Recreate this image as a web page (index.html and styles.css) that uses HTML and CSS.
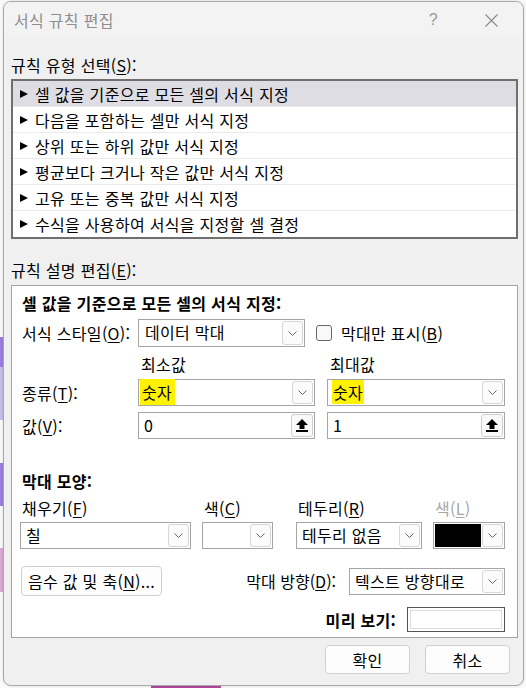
FILE: index.html
```html
<!DOCTYPE html>
<html lang="ko">
<head>
    <meta charset="UTF-8">
    <title>서식 규칙 편집</title>
    <link rel="stylesheet" href="styles.css">
</head>
<body>

<div class="dialog">
    <div class="titlebar">
        <span class="title">서식 규칙 편집</span>
        <span class="help">?</span>
        <span class="close">
            <svg width="13" height="13" viewBox="0 0 13 13"><path d="M0.5 0.5L12.5 12.5M12.5 0.5L0.5 12.5" stroke="#8a8a8a" stroke-width="1.1" fill="none"/></svg>
        </span>
    </div>

    <div class="content">
        <div class="caption cap-type">규칙 유형 선택(<u>S</u>):</div>
        <ul class="rules">
            <li class="selected"><span class="tri"></span>셀 값을 기준으로 모든 셀의 서식 지정</li>
            <li><span class="tri"></span>다음을 포함하는 셀만 서식 지정</li>
            <li><span class="tri"></span>상위 또는 하위 값만 서식 지정</li>
            <li><span class="tri"></span>평균보다 크거나 작은 값만 서식 지정</li>
            <li><span class="tri"></span>고유 또는 중복 값만 서식 지정</li>
            <li><span class="tri"></span>수식을 사용하여 서식을 지정할 셀 결정</li>
        </ul>

        <div class="caption cap-desc">규칙 설명 편집(<u>E</u>):</div>
        <div class="panel">
            <div class="heading">셀 값을 기준으로 모든 셀의 서식 지정:</div>

            <div class="style-row">
                <span class="row-label">서식 스타일(<u>O</u>):</span>
                <div class="select w-style">
                    <span class="value">데이터 막대</span>
                    <span class="drop"><svg width="9" height="5" viewBox="0 0 9 5"><polyline points="0.5,0.5 4.5,4.5 8.5,0.5" fill="none" stroke="#666" stroke-width="1"/></svg></span>
                </div>
                <span class="check"></span>
                <span class="check-label">막대만 표시(<u>B</u>)</span>
            </div>

            <div class="minmax">
                <span></span>
                <span class="col-head">최소값</span>
                <span class="col-head">최대값</span>

                <span class="row-label">종류(<u>T</u>):</span>
                <div class="select">
                    <span class="value"><mark class="hl-min">숫자</mark></span>
                    <span class="drop"><svg width="9" height="5" viewBox="0 0 9 5"><polyline points="0.5,0.5 4.5,4.5 8.5,0.5" fill="none" stroke="#666" stroke-width="1"/></svg></span>
                </div>
                <div class="select">
                    <span class="value"><mark class="hl-max">숫자</mark></span>
                    <span class="drop"><svg width="9" height="5" viewBox="0 0 9 5"><polyline points="0.5,0.5 4.5,4.5 8.5,0.5" fill="none" stroke="#666" stroke-width="1"/></svg></span>
                </div>

                <span class="row-label">값(<u>V</u>):</span>
                <div class="select">
                    <span class="value">0</span>
                    <span class="pick"><svg width="12" height="13" viewBox="0 0 12 13"><path d="M6 0L12 6H8.5V10H3.5V6H0Z" fill="#000"/><rect x="0" y="11" width="12" height="2" fill="#000"/></svg></span>
                </div>
                <div class="select">
                    <span class="value">1</span>
                    <span class="pick"><svg width="12" height="13" viewBox="0 0 12 13"><path d="M6 0L12 6H8.5V10H3.5V6H0Z" fill="#000"/><rect x="0" y="11" width="12" height="2" fill="#000"/></svg></span>
                </div>
            </div>

            <div class="heading bar-head">막대 모양:</div>

            <div class="appearance">
                <span class="field-label">채우기(<u>F</u>)</span>
                <span class="field-label">색(<u>C</u>)</span>
                <span class="field-label c3">테두리(<u>R</u>)</span>
                <span class="field-label disabled">색(<u>L</u>)</span>

                <div class="select">
                    <span class="value">칠</span>
                    <span class="drop"><svg width="9" height="5" viewBox="0 0 9 5"><polyline points="0.5,0.5 4.5,4.5 8.5,0.5" fill="none" stroke="#666" stroke-width="1"/></svg></span>
                </div>
                <div class="select">
                    <span class="value"></span>
                    <span class="drop"><svg width="9" height="5" viewBox="0 0 9 5"><polyline points="0.5,0.5 4.5,4.5 8.5,0.5" fill="none" stroke="#666" stroke-width="1"/></svg></span>
                </div>
                <div class="select c3">
                    <span class="value">테두리 없음</span>
                    <span class="drop"><svg width="9" height="5" viewBox="0 0 9 5"><polyline points="0.5,0.5 4.5,4.5 8.5,0.5" fill="none" stroke="#666" stroke-width="1"/></svg></span>
                </div>
                <div class="select">
                    <span class="swatch"></span>
                    <span class="drop"><svg width="9" height="5" viewBox="0 0 9 5"><polyline points="0.5,0.5 4.5,4.5 8.5,0.5" fill="none" stroke="#666" stroke-width="1"/></svg></span>
                </div>
            </div>

            <div class="axis-row">
                <button class="btn negative">음수 값 및 축(<u>N</u>)...</button>
                <div class="direction">
                    <span class="dir-label">막대 방향(<u>D</u>):</span>
                    <div class="select w-dir">
                        <span class="value">텍스트 방향대로</span>
                        <span class="drop"><svg width="9" height="5" viewBox="0 0 9 5"><polyline points="0.5,0.5 4.5,4.5 8.5,0.5" fill="none" stroke="#666" stroke-width="1"/></svg></span>
                    </div>
                </div>
            </div>

            <div class="preview-row">
                <span class="preview-label">미리 보기:</span>
                <div class="preview"><div class="preview-inner"></div></div>
            </div>
        </div>

        <div class="actions">
            <button class="btn ok">확인</button>
            <button class="btn">취소</button>
        </div>
    </div>
</div>

</body>
</html>
```

FILE: styles.css
```css
* {
    box-sizing: border-box;
}

html, body {
    margin: 0;
    padding: 0;
    height: 688px;
    overflow: hidden;
}

body {
    font-family: "Noto Sans CJK KR", "Noto Sans", sans-serif;
    font-size: 16px;
    letter-spacing: 0.3px;
    color: #000;
    /* spreadsheet peeking out behind the dialog */
    background:
        linear-gradient(to bottom,
            transparent 337px, #9b7ede 337px, #9b7ede 367px,
            #c9bdea 367px, #c9bdea 420px, transparent 420px,
            transparent 463px, #9b7ede 463px, #9b7ede 506px, transparent 506px,
            transparent 548px, #dba9d4 548px, #dba9d4 592px, transparent 592px) left top / 3px 100% no-repeat,
        linear-gradient(to right, transparent 151px, #b5479f 151px, #b5479f 221px, transparent 221px) left bottom / 100% 2px no-repeat,
        #fafafa;
}

u {
    text-decoration: underline;
    text-underline-offset: 2px;
}

.dialog {
    margin: 1px 0 0 3px;
    width: 521px;
    height: 685px;
    border: 1px solid #a9a9a9;
    border-radius: 8px;
    background: #f0f0f0;
    overflow: hidden;
    box-shadow: 0 0 3px rgba(0, 0, 0, 0.15);
}

.titlebar {
    display: flex;
    align-items: center;
    height: 36px;
    padding: 0 25px 0 10px;
    background: #f3f3f3;
}

.title {
    flex: 1;
    color: #8e8e8e;
    line-height: 20px;
}

.help {
    color: #9a9a9a;
    font-family: "Liberation Sans", sans-serif;
    font-size: 16px;
    margin-right: 47px;
}

.close {
    display: flex;
}

.content {
    padding: 0 5px 0 7px;
}

.caption {
    line-height: 20px;
}

.cap-type {
    margin-top: 17px;
}

.rules {
    list-style: none;
    margin: 4px 0 0 0;
    padding: 0;
    height: 160px;
    border: 2px solid #6f6f6f;
    background: #fff;
}

.rules li {
    display: flex;
    align-items: center;
    height: 26px;
    padding-left: 7px;
    border-bottom: 1px solid #ebebeb;
    white-space: nowrap;
}

.rules li:last-child {
    border-bottom: none;
}

.rules li.selected {
    background: #dedde3;
}

.tri {
    width: 0;
    height: 0;
    border-left: 8px solid #000;
    border-top: 4.5px solid transparent;
    border-bottom: 4.5px solid transparent;
    margin-right: 7px;
}

.cap-desc {
    margin-top: 21px;
}

.panel {
    margin-top: 5px;
    height: 353px;
    border: 1px solid #a3a3a3;
    background: #fff;
    padding: 7px 12px 0 10px;
}

.heading {
    font-weight: 700;
    line-height: 20px;
}

.style-row {
    display: flex;
    align-items: center;
    margin-top: 6px;
    height: 28px;
}

.row-label {
    width: 116px;
}

.minmax .row-label {
    width: auto;
}

.select {
    display: flex;
    align-items: stretch;
    height: 27px;
    border: 1px solid #a5a5a5;
    background: #fff;
    padding: 1px;
}

.select .value {
    flex: 1;
    padding-left: 4px;
    line-height: 23px;
    white-space: nowrap;
}

.drop {
    width: 21px;
    display: flex;
    align-items: center;
    justify-content: center;
    border: 1px solid #d7d7d7;
    border-radius: 3px;
    background: #fbfbfb;
}

.pick {
    width: 22px;
    display: flex;
    align-items: center;
    justify-content: center;
    border: 1px solid #cfcfcf;
    border-radius: 3px;
    background: #f9f9f9;
}

.w-style {
    width: 167px;
    height: 28px;
}

.w-style .value {
    padding-left: 5px;
}

.check {
    width: 16px;
    height: 16px;
    border: 1px solid #686868;
    border-radius: 3px;
    background: #f9f9f9;
    margin-left: 11px;
}

.check-label {
    margin-left: 9px;
    line-height: 20px;
}

.minmax {
    display: grid;
    grid-template-columns: 104px 177px 178px;
    grid-template-rows: 18px 27px 27px;
    column-gap: 12px;
    row-gap: 6px;
    align-items: center;
    margin-top: 8px;
}

.col-head {
    line-height: 18px;
    padding-left: 3px;
}

mark {
    color: #000;
    background: #fff200;
}

.hl-min {
    padding: 1px 3px 1px 2px;
    margin-left: -4px;
}

.hl-max {
    padding: 0 1px;
    margin-left: -1px;
}

.bar-head {
    margin-top: 32px;
}

.appearance {
    display: grid;
    grid-template-columns: 171px 71px 138px 72px;
    grid-template-rows: 20px 27px;
    column-gap: 11px;
    row-gap: 4px;
    margin: 7px 0 0 -2px;
}

.appearance .c3 {
    margin-left: 12px;
}

.field-label {
    line-height: 20px;
    padding-left: 2px;
}

.field-label.disabled {
    color: #a6a6a6;
}

.swatch {
    flex: 1;
    background: #000;
    margin-right: 1px;
}

.axis-row {
    display: flex;
    justify-content: space-between;
    align-items: flex-start;
    margin: 17px 0 0 -1px;
}

.btn {
    font-family: "Noto Sans CJK KR", "Noto Sans", sans-serif;
    font-size: 16px;
    letter-spacing: 0.3px;
    color: #000;
    background: #fdfdfd;
    border: 1px solid #d0d0d0;
    border-radius: 4px;
    padding: 0;
    line-height: 20px;
}

.negative {
    width: 141px;
    height: 30px;
}

.direction {
    display: flex;
    align-items: center;
}

.dir-label {
    margin-right: 13px;
    line-height: 30px;
    letter-spacing: 0;
}

.w-dir {
    width: 156px;
}

.preview-row {
    display: flex;
    justify-content: flex-end;
    align-items: center;
    margin-top: 11px;
}

.preview-label {
    font-weight: 700;
    margin-right: 11px;
    line-height: 20px;
}

.preview {
    width: 98px;
    height: 25px;
    border: 1px solid #555;
    padding: 2px;
}

.preview-inner {
    height: 100%;
    border: 1px solid #dcdcdc;
}

.actions {
    display: flex;
    justify-content: flex-end;
    gap: 15px;
    margin-top: 7px;
    padding-right: 8px;
}

.actions .btn {
    width: 85px;
    height: 29px;
}
```
